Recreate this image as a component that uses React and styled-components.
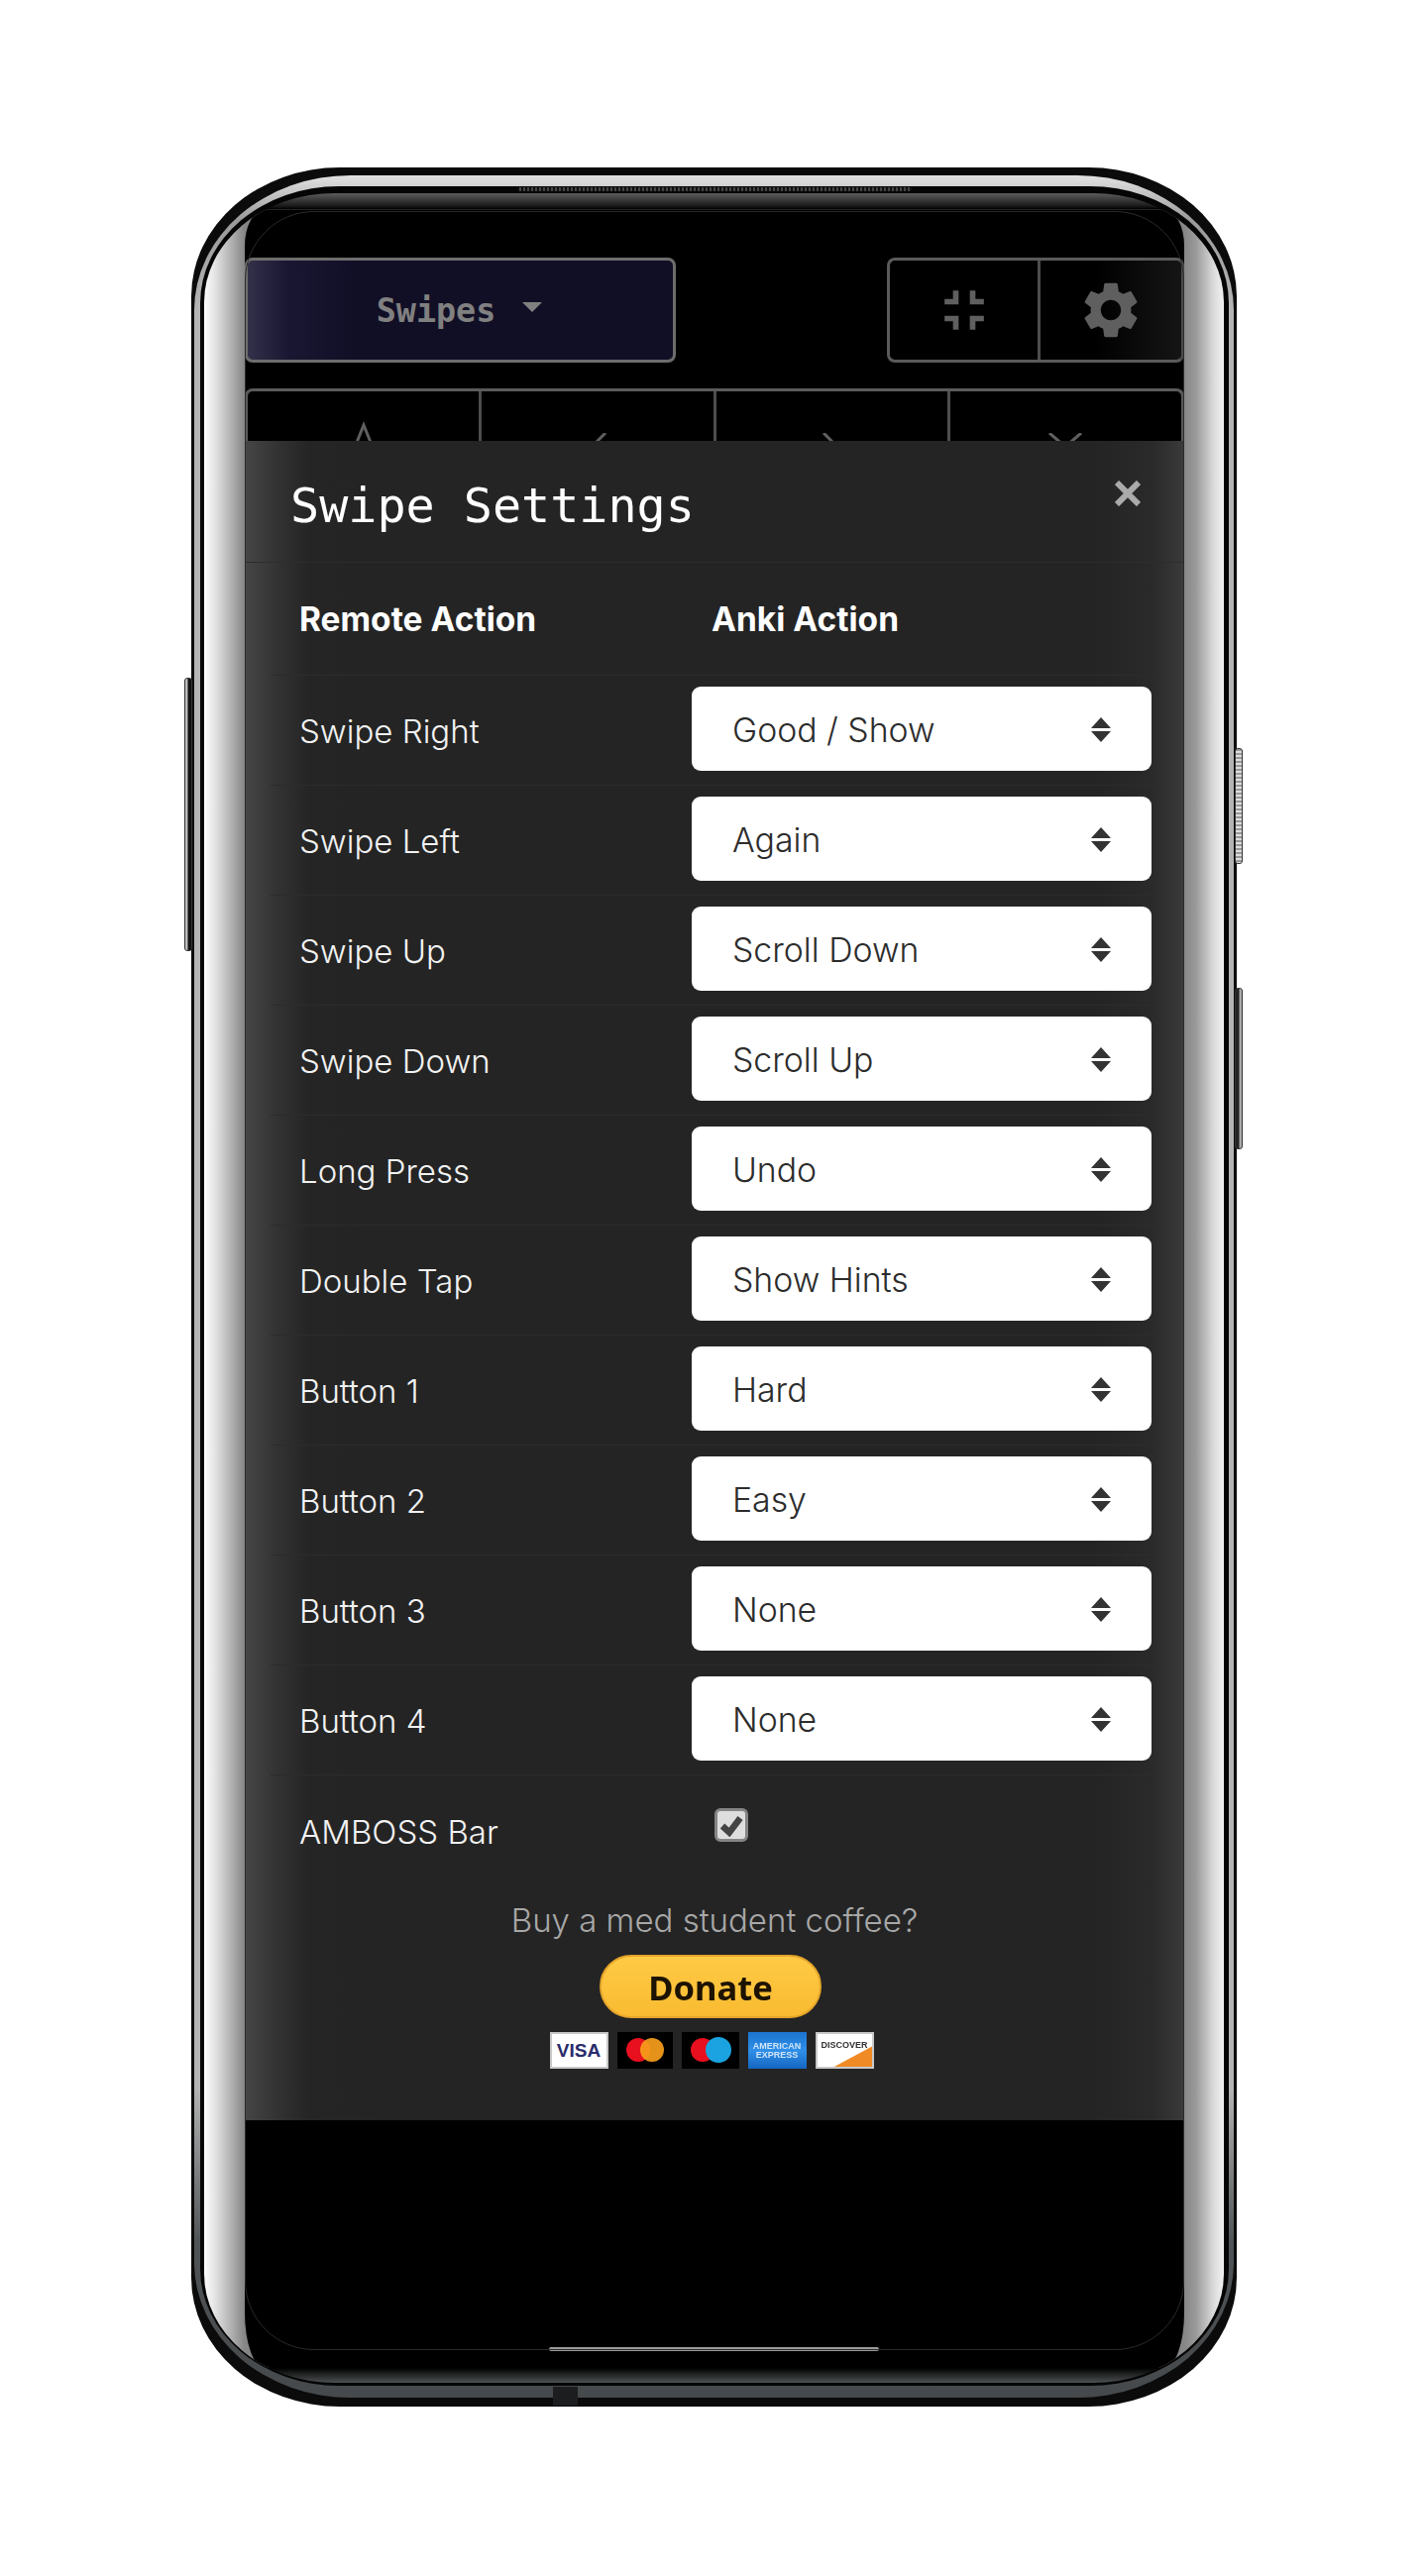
import React from 'react';
import styled, { createGlobalStyle } from 'styled-components';
import { MdFullscreenExit, MdSettings } from 'react-icons/md';

const Global = createGlobalStyle`
  html, body { margin: 0; padding: 0; background: #fff; }
  * { box-sizing: border-box; }
`;
const sans = `Inter, "Open Sans", sans-serif`;
const mono = `"DejaVu Sans Mono", "Liberation Mono", monospace`;

const Page = styled.div`
  width: 1440px; height: 2600px; padding: 169px 0 0 193px; background: #fff; overflow: hidden;
`;
const Shell = styled.div`
  position: relative; width: 1055px; height: 2260px; padding: 8px 3px 9px;
  background: #0b0b0b; border-radius: 150px / 130px;
`;
const SideKey = styled.div`
  position: absolute; top: ${p => p.$top}px; height: ${p => p.$h}px; width: 8px;
  ${p => p.$left ? 'left: -7px;' : 'right: -6px;'}
  background: ${p => p.$left ? 'linear-gradient(90deg,#bbb 0 2px,#111 3px)' : p.$ridged ? 'repeating-linear-gradient(180deg,#999 0 2px,#ddd 2px 4px)' : 'linear-gradient(90deg,#222 0 3px,#aaa 4px 6px,#333 7px)'};
  border: 1px solid #333; border-radius: 3px;
`;
const Speaker = styled.div`
  position: absolute; top: 20px; left: 329px; width: 398px; height: 4px;
  background: repeating-linear-gradient(90deg,#111 0 2px,#444 2px 4px); border-radius: 2px;
`;
const BottomPort = styled.div`
  position: absolute; bottom: 1px; left: 365px; width: 25px; height: 19px; background: #1b1d1e;
`;
const Rim = styled.div`
  height: 100%; padding: 11px 5px 12px 6px; border-radius: 158px / 136px;
  background: linear-gradient(180deg,#e2e2e2 0,#9a9a9a 2%,#b4b4b4 6%,#b4b4b4 86%,#505456 93%,#45494b 100%);
`;
const Inner = styled.div`
  height: 100%; padding: 7px 5px 3px 4px; background: #050505; border-radius: 140px / 118px;
`;
const Glass = styled.div`
  height: 100%; display: flex; flex-direction: column; overflow: hidden; border-radius: 132px / 110px; background: #000;
`;
const TopBand = styled.div`
  height: 17px; flex: none; background: linear-gradient(180deg,#5c5c5c 0,#1a1a1a 80%,#000 100%);
  border-bottom: 1px solid #222;
`;
const BottomBand = styled.div`
  height: 15px; flex: none; background: linear-gradient(180deg,#000 0,#4c5153 100%);
`;
const Middle = styled.div`
  flex: 1; display: flex; padding: 0 40px 0 41px;
  background: linear-gradient(90deg,#fdfdfd 0,#e6e6e6 10px,#b5b5b5 26px,#868686 41px,#868686 calc(100% - 40px),#9a9a9a calc(100% - 28px),#dcdcdc calc(100% - 10px),#f2f2f2 100%);
`;
const Screen = styled.div`
  position: relative; flex: 1; background: #000; overflow: hidden;
  border-radius: 20px 20px 20px 20px / 36px 36px 56px 56px;
`;
const CornerLine = styled.div`
  position: absolute; inset: 1px 0 18px 0; border: 1px solid #2a2a2a; border-radius: 70px; pointer-events: none;
`;
const Toolbar = styled.div`
  display: flex; justify-content: space-between; padding-top: 48px;
`;
const ModeButton = styled.div`
  width: 435px; height: 106px; padding-right: 2px; display: flex; align-items: center; justify-content: center; gap: 27px;
  border: 3px solid #6d6d6d; border-radius: 8px;
  background: linear-gradient(90deg,#33304a 0,#191732 40px,#110f26 110px);
  color: #808080; font: 700 33.4px ${mono};
`;
const Caret = styled.span`
  width: 0; height: 0; border: 10px solid transparent; border-top: 10px solid #808080; border-bottom: 0; margin-top: -6px;
`;
const IconGroup = styled.div`
  width: 300px; height: 106px; display: flex; border: 3px solid #5a5a5a; border-right-color: #4a4a4a; border-radius: 8px;
  background: linear-gradient(90deg,#000 70%,#151515 100%);
`;
const IconCell = styled.div`
  flex: ${p => p.$w ? `0 0 ${p.$w}px` : 1}; display: flex; align-items: center; justify-content: center; color: #5f5f5f;
  & + & { border-left: 3px solid #4d4d4d; }
`;
const ActionRow = styled.div`
  margin-top: 26px; height: 160px; display: flex; border: 3px solid #5a5a5a; border-bottom: 0; border-radius: 8px 8px 0 0;
`;
const ActionCell = styled.div`
  flex: 1; display: flex; justify-content: center; padding-top: ${p => p.$pt}px; color: #5f5f5f;
  & + & { border-left: 3px solid #4d4d4d; }
`;
const Modal = styled.div`
  position: absolute; top: 233px; left: 0; right: 0; height: 1695px; color: #fff;
  background: linear-gradient(90deg,#464646 0,#333 32px,#252525 64px,#242424 130px,#242424 calc(100% - 90px),#2a2a2a calc(100% - 32px),#3a3a3a 100%);
`;
const ModalHeader = styled.div`
  position: relative; height: 123px; padding: 37px 0 0 46px; border-bottom: 1px solid #2d2d2d;
`;
const Title = styled.h5`
  margin: 0; font: 400 48.4px/56px ${mono}; color: #fff;
`;
const Close = styled.div`
  position: absolute; top: 40px; right: 44px; width: 26px; height: 26px; display: flex; color: #aaa;
`;
const Table = styled.div`
  margin: 0 25px 0 26px;
`;
const Row = styled.div`
  display: grid; grid-template-columns: 425px 1fr; height: ${p => p.$h || 111}px;
  border-bottom: ${p => p.$plain ? 0 : '1px solid #2c2c2c'};
`;
const HeadCell = styled.div`
  padding-left: ${p => p.$pad}px; display: flex; align-items: center; font: 700 33.5px ${sans}; color: #fff;
`;
const Label = styled.div`
  padding: 2px 0 0 29px; display: flex; align-items: center; font: 300 33px ${sans}; color: #f2f2f2;
`;
const SelectBox = styled.div`
  position: relative; width: 464px; height: 85px; margin-top: 11px; padding: 1px 0 0 41px; display: flex; align-items: center;
  background: #fff; border-radius: 9px; font: 300 33.8px ${sans}; color: #2c2c2c;
`;
const Arrows = styled.svg`
  position: absolute; right: 41px; top: 31px; width: 20px; height: 26px; fill: #333;
`;
const CheckCell = styled.div`
  padding: 33px 0 0 23px;
`;
const CheckBox = styled.div`
  width: 34px; height: 34px; display: flex; align-items: center; justify-content: center;
  background: #dedede; border: 3px solid #858585; border-radius: 6px; color: #444;
`;
const Donation = styled.div`
  display: flex; flex-direction: column; align-items: center; padding-top: 12px;
`;
const Prompt = styled.p`
  margin: 0; font: 300 33px/46px ${sans}; color: #a8a8a8;
`;
const DonateButton = styled.div`
  width: 224px; height: 64px; margin: 12px 8px 0 0; display: flex; align-items: center; justify-content: center;
  background: linear-gradient(180deg,#ffca45,#f9bb31); border: 2px solid #e5a52a; border-radius: 32px;
  font: 700 34.5px "Noto Sans", sans-serif; color: #1d1302; filter: blur(.4px);
`;
const Cards = styled.div`
  display: flex; gap: 9px; margin: 14px 6px 0 0; filter: blur(.5px);
`;
const Card = styled.div`
  position: relative; width: ${p => p.$w || 59}px; height: 37px; overflow: hidden; display: flex; align-items: center; justify-content: center;
  background: ${p => p.$bg}; border: ${p => p.$edge ? '2px solid #c9c9c9' : '0'};
`;
const CardText = styled.span`
  font: 700 ${p => p.$s}px/1 "Liberation Sans", sans-serif; color: ${p => p.$c}; text-align: center; position: relative;
`;
const Swoosh = styled.svg`
  position: absolute; right: 0; bottom: 0; width: 100%; height: 100%;
`;
const HomeBar = styled.div`
  position: absolute; bottom: 17px; left: 307px; width: 333px; height: 4px; background: #9b9b9b; border-radius: 2px;
`;

const Stroke = ({ d, w = 60, h = 40 }) => (
  <svg width={w} height={h} viewBox={`0 0 ${w} ${h}`} fill="none" stroke="currentColor" strokeWidth="3">
    <path d={d} />
  </svg>
);
const rows = [
  ['Swipe Right', 'Good / Show'], ['Swipe Left', 'Again'], ['Swipe Up', 'Scroll Down'], ['Swipe Down', 'Scroll Up'],
  ['Long Press', 'Undo'], ['Double Tap', 'Show Hints'], ['Button 1', 'Hard'], ['Button 2', 'Easy'], ['Button 3', 'None'], ['Button 4', 'None'],
];

export default function App() {
  return (
    <Page>
      <Global />
      <Shell>
        <SideKey $left $top={515} $h={276} />
        <SideKey $ridged $top={586} $h={117} />
        <SideKey $top={828} $h={163} />
        <Speaker />
        <BottomPort />
        <Rim>
          <Inner>
            <Glass>
              <TopBand />
              <Middle>
                <Screen>
                  <Toolbar>
                    <ModeButton>Swipes<Caret /></ModeButton>
                    <IconGroup>
                      <IconCell $w={149}><MdFullscreenExit size={68} /></IconCell>
                      <IconCell><MdSettings size={68} /></IconCell>
                    </IconGroup>
                  </Toolbar>
                  <ActionRow>
                    <ActionCell $pt={30}><Stroke d="M18 34 L30 4 L42 34 M24 38 L30 24 L36 38" /></ActionCell>
                    <ActionCell $pt={42}><Stroke d="M38 0 L22 16 L38 32" /></ActionCell>
                    <ActionCell $pt={42}><Stroke d="M22 0 L38 16 L22 32" /></ActionCell>
                    <ActionCell $pt={42}><Stroke d="M14 0 L30 14 L46 0 M30 14 L46 30 M30 14 L14 30" /></ActionCell>
                  </ActionRow>
                  <Modal>
                    <ModalHeader>
                      <Title>Swipe Settings</Title>
                      <Close>
                        <svg width="26" height="26" viewBox="0 0 26 26" fill="none" stroke="currentColor" strokeWidth="6">
                          <path d="M2 2 L24 24 M24 2 L2 24" />
                        </svg>
                      </Close>
                    </ModalHeader>
                    <Table>
                      <Row $h={114}>
                        <HeadCell $pad={29}>Remote Action</HeadCell>
                        <HeadCell $pad={20}>Anki Action</HeadCell>
                      </Row>
                      {rows.map(([a, b]) => (
                        <Row key={a}>
                          <Label>{a}</Label>
                          <SelectBox>
                            {b}
                            <Arrows viewBox="0 0 20 26"><path d="M10 0 L20 11 H0 Z M0 14 H20 L10 25 Z" /></Arrows>
                          </SelectBox>
                        </Row>
                      ))}
                      <Row $plain>
                        <Label>AMBOSS Bar</Label>
                        <CheckCell>
                          <CheckBox>
                            <svg width="24" height="24" viewBox="0 0 24 24" fill="none" stroke="currentColor" strokeWidth="6.5">
                              <path d="M3 13 L10 19.5 L21 5" />
                            </svg>
                          </CheckBox>
                        </CheckCell>
                      </Row>
                    </Table>
                    <Donation>
                      <Prompt>Buy a med student coffee?</Prompt>
                      <DonateButton>Donate</DonateButton>
                      <Cards>
                        <Card $bg="#fff" $edge><CardText $s={19} $c="#2a2c6b">VISA</CardText></Card>
                        <Card $bg="#000" $w={56}>
                          <svg width="40" height="28" viewBox="0 0 40 28"><circle cx="13" cy="13" r="12" fill="#e8101f" /><circle cx="27" cy="13" r="12" fill="#f79e1b" opacity=".92" /></svg>
                        </Card>
                        <Card $bg="#000" $w={58}>
                          <svg width="44" height="28" viewBox="0 0 44 28"><circle cx="14" cy="13" r="12" fill="#e8101f" /><circle cx="30" cy="13" r="13" fill="#1aa3e0" /></svg>
                        </Card>
                        <Card $bg="linear-gradient(180deg,#1c74cf,#2f8fe8 50%,#1566c0)"><CardText $s={9} $c="#cfe4fa">AMERICAN EXPRESS</CardText></Card>
                        <Card $bg="#fff" $edge>
                          <Swoosh viewBox="0 0 59 37" preserveAspectRatio="none"><path d="M18 37 L59 14 V37 Z" fill="#f08a24" /></Swoosh>
                          <CardText $s={9} $c="#333" style={{ top: -5 }}>DISCOVER</CardText>
                        </Card>
                      </Cards>
                    </Donation>
                  </Modal>
                  <HomeBar />
                  <CornerLine />
                </Screen>
              </Middle>
              <BottomBand />
            </Glass>
          </Inner>
        </Rim>
      </Shell>
    </Page>
  );
}
